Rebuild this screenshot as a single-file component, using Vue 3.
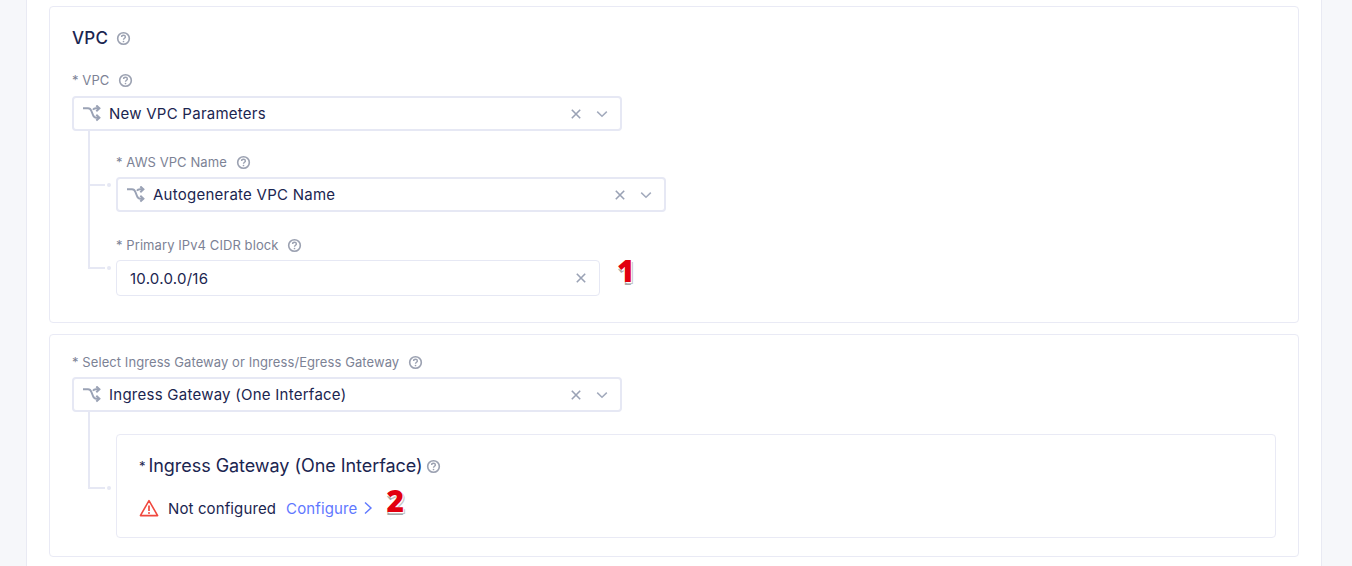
<script setup>
const nestedVpc = [
  { label: 'AWS VPC Name', value: 'Autogenerate VPC Name' },
]
</script>

<template>
  <div class="page">
    <main class="content">
      <section class="card first">
        <h2 class="title">VPC <svg class="help" viewBox="0 0 16 16"><use href="#help" /></svg></h2>

        <label class="label">* VPC <svg class="help" viewBox="0 0 16 16"><use href="#help" /></svg></label>
        <div class="select">
          <svg class="switch" viewBox="0 0 18 18"><use href="#switch" /></svg>
          <span class="value">New VPC Parameters</span>
          <svg class="clear" viewBox="0 0 12 12"><use href="#clear" /></svg>
          <svg class="chev" viewBox="0 0 12 12"><use href="#chev" /></svg>
        </div>

        <div class="nested vpc">
          <span class="line"></span>
          <div class="field" v-for="f in nestedVpc" :key="f.label">
            <span class="elbow"></span>
            <label class="label">* {{ f.label }} <svg class="help" viewBox="0 0 16 16"><use href="#help" /></svg></label>
            <div class="select">
              <svg class="switch" viewBox="0 0 18 18"><use href="#switch" /></svg>
              <span class="value">{{ f.value }}</span>
              <svg class="clear" viewBox="0 0 12 12"><use href="#clear" /></svg>
              <svg class="chev" viewBox="0 0 12 12"><use href="#chev" /></svg>
            </div>
          </div>
          <div class="field cidr">
            <span class="elbow"></span>
            <label class="label">* Primary IPv4 CIDR block <svg class="help" viewBox="0 0 16 16"><use href="#help" /></svg></label>
            <div class="input-row">
              <div class="input">
                <span class="value">10.0.0.0/16</span>
                <svg class="clear" viewBox="0 0 12 12"><use href="#clear" /></svg>
              </div>
              <span class="mark one">1</span>
            </div>
          </div>
        </div>
      </section>

      <section class="card second">
        <label class="label">* Select Ingress Gateway or Ingress/Egress Gateway <svg class="help" viewBox="0 0 16 16"><use href="#help" /></svg></label>
        <div class="select">
          <svg class="switch" viewBox="0 0 18 18"><use href="#switch" /></svg>
          <span class="value">Ingress Gateway (One Interface)</span>
          <svg class="clear" viewBox="0 0 12 12"><use href="#clear" /></svg>
          <svg class="chev" viewBox="0 0 12 12"><use href="#chev" /></svg>
        </div>

        <div class="nested gateway">
          <span class="line"></span>
          <div class="subcard">
            <span class="elbow"></span>
            <h3 class="subtitle"><span class="star">*</span> Ingress Gateway (One Interface) <svg class="help" viewBox="0 0 16 16"><use href="#help" /></svg></h3>
            <div class="status">
              <svg class="warn" viewBox="0 0 20 20">
                <path d="M10 2.600 18.600 17.600H1.400Z" fill="none" stroke="#f0483e" stroke-width="1.600" stroke-linejoin="round" />
                <path d="M10 7.600V13" stroke="#f0483e" stroke-width="1.700" />
                <circle cx="10" cy="15" r="1" fill="#f0483e" />
              </svg>
              <span class="not">Not configured</span>
              <a class="link">Configure
                <svg class="go" viewBox="0 0 10 14"><path d="M2 1.500 8 7 2 12.500" fill="none" stroke="currentColor" stroke-width="1.400" /></svg>
              </a>
              <span class="mark two">2</span>
            </div>
          </div>
        </div>
      </section>
    </main>

    <svg class="defs" width="0" height="0">
      <symbol id="help" viewBox="0 0 16 16">
        <circle cx="8" cy="8" r="6.200" fill="none" stroke="currentColor" stroke-width="1.700" />
        <path d="M6 6.400C6 5.200 6.900 4.600 8 4.600S10 5.300 10 6.300C10 7.700 8 7.700 8 9.300" fill="none" stroke="currentColor" stroke-width="1.500" />
        <circle cx="8" cy="11.200" r=".9" fill="currentColor" />
      </symbol>
      <symbol id="switch" viewBox="0 0 18 18">
        <g fill="none" stroke="#9aa2b5" stroke-width="2">
          <path d="M0 3.300H5C7 3.300 7.800 4.400 8.400 6L10 10C10.600 11.700 11.500 12.700 13.400 12.700H16" />
          <path d="M10 4.800C10.600 3.800 11.600 3.300 13 3.300H16" />
          <path d="M13.300 0.400 16.400 3.300 13.300 6.200" />
          <path d="M13.300 9.800 16.400 12.700 13.300 15.600" />
        </g>
      </symbol>
      <symbol id="clear" viewBox="0 0 12 12">
        <path d="M1.800 1.800 10.200 10.200M10.200 1.800 1.800 10.200" stroke="#9aa2b5" stroke-width="1.600" fill="none" />
      </symbol>
      <symbol id="chev" viewBox="0 0 12 12">
        <path d="M1.200 3.600 6 8.200 10.800 3.600" stroke="#a3abbd" stroke-width="1.500" fill="none" />
      </symbol>
    </svg>
  </div>
</template>

<style>
html, body {
  margin: 0;
  background: #f6f7fa;
}
</style>

<style scoped>
.page {
  height: 566px;
  overflow: hidden;
  box-sizing: border-box;
  padding: 0 30px 0 26px;
  font-family: Inter, "Liberation Sans", sans-serif;
  color: #1b2550;
  background: #f6f7fa;
}
.content {
  box-sizing: border-box;
  height: 566px;
  background: #fff;
  border-left: 1px solid #e9eaf3;
  border-right: 1px solid #e9eaf3;
  padding: 6px 22px 0;
}
.card {
  box-sizing: border-box;
  border: 1px solid #e9eaf5;
  border-radius: 4px;
  padding: 0 22px;
}
.first {
  height: 317px;
  padding-top: 20px;
}
.second {
  height: 223px;
  margin-top: 11px;
  padding-top: 19px;
}
.title {
  margin: 0 0 23px;
  height: 22px;
  line-height: 22px;
  font-size: 17px;
  font-weight: 500;
  letter-spacing: .3px;
  display: flex;
  align-items: center;
  gap: 8px;
}
.label {
  display: flex;
  align-items: center;
  gap: 5px;
  height: 16px;
  line-height: 16px;
  font-size: 13px;
  letter-spacing: .08px;
  color: #7c8295;
  margin-bottom: 7px;
  white-space: pre;
}
.first > .label {
  margin-bottom: 8px;
}
.help {
  width: 15px;
  height: 15px;
  color: #9ba1b1;
  flex: none;
}
.select {
  box-sizing: border-box;
  width: 550px;
  height: 35px;
  border: 2px solid #e6e8f4;
  border-radius: 4px;
  display: flex;
  align-items: center;
  padding: 0 12px 0 9px;
}
.switch {
  width: 18px;
  height: 18px;
  flex: none;
  margin-right: 8px;
}
.value {
  flex: 1;
  font-size: 15px;
  letter-spacing: .25px;
  color: #1b2550;
}
.clear {
  width: 12px;
  height: 12px;
  flex: none;
  margin-right: 14px;
}
.chev {
  width: 12px;
  height: 12px;
  flex: none;
}
.nested {
  position: relative;
  padding-left: 44px;
}
.line {
  position: absolute;
  left: 16px;
  top: 0;
  width: 2px;
  background: #e6e8f4;
}
.vpc {
  padding-top: 23px;
}
.vpc .line {
  height: 138px;
}
.gateway {
  padding-top: 22px;
}
.gateway .line {
  height: 77px;
}
.field {
  position: relative;
}
.cidr {
  margin-top: 25px;
}
.elbow {
  position: absolute;
  left: -27px;
  width: 16px;
  height: 2px;
  background: #e6e8f4;
}
.elbow::after {
  content: "";
  position: absolute;
  left: 18px;
  top: -1px;
  width: 4px;
  height: 4px;
  border-radius: 50%;
  background: #e6e8f4;
}
.field .elbow {
  top: 30px;
}
.input-row {
  display: flex;
  align-items: center;
}
.input {
  box-sizing: border-box;
  width: 484px;
  height: 36px;
  border: 1px solid #e6e8f4;
  border-radius: 4px;
  display: flex;
  align-items: center;
  padding: 0 12px 0 13px;
}
.input .clear {
  margin-right: 0;
}
.mark {
  font-family: "Open Sans", "Liberation Sans", sans-serif;
  font-weight: 800;
  color: #e2000f;
  font-size: 30px;
  line-height: 30px;
  text-shadow: 1px 1px 0 #fff, -1px 0 0 #fff, 2px 2px 0 #c4c4c4, 0 3px 0 #a8a8a8;
}
.one {
  margin-left: 17px;
  margin-top: -14px;
}
.two {
  margin-left: 13px;
  margin-top: -14px;
}
.subcard {
  position: relative;
  box-sizing: border-box;
  height: 104px;
  border: 1px solid #e9eaf5;
  border-radius: 4px;
  padding: 19px 22px 0;
}
.subcard .elbow {
  left: -28px;
  top: 52px;
}
.subtitle {
  margin: 0;
  height: 24px;
  line-height: 24px;
  font-size: 18px;
  font-weight: 400;
  letter-spacing: -.05px;
  display: flex;
  align-items: center;
  white-space: pre;
  color: #1b2550;
}
.star {
  font-size: 13px;
  margin-right: -2px;
}
.subtitle .help {
  margin-left: -2px;
}
.status {
  display: flex;
  align-items: center;
  height: 28px;
  margin-top: 16px;
  font-size: 15px;
  letter-spacing: .12px;
}
.warn {
  width: 20px;
  height: 20px;
  flex: none;
  margin-right: 9px;
}
.not {
  margin-right: 10px;
}
.link {
  color: #5f78ff;
  display: flex;
  align-items: center;
  gap: 6px;
}
.go {
  width: 10px;
  height: 14px;
}
.defs {
  position: absolute;
}
</style>
